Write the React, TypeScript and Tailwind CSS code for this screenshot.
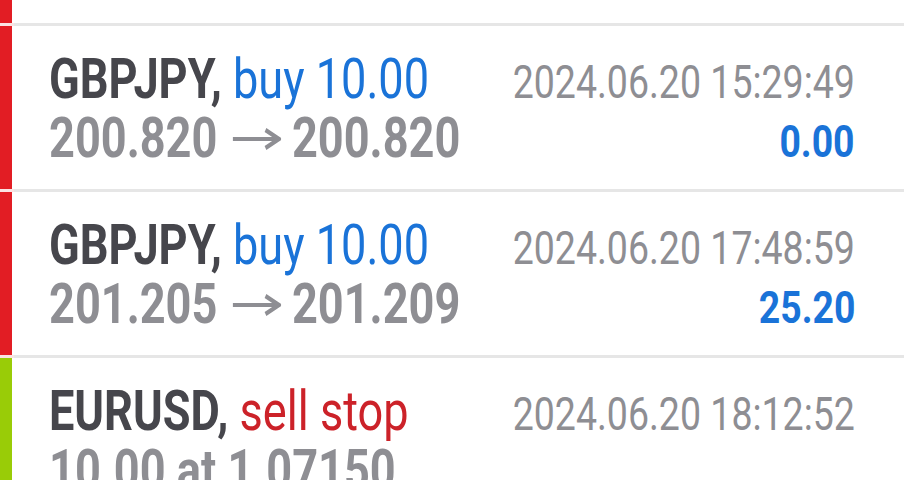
import React from "react";

type Deal = {
  symbol: string;
  action: string;
  side: "buy" | "sell";
  from?: string;
  to?: string;
  detail?: string;
  time: string;
  profit?: string;
  bar: string;
};

const deals: Deal[] = [
  {
    symbol: "GBPJPY",
    action: "buy 10.00",
    side: "buy",
    from: "200.820",
    to: "200.820",
    time: "2024.06.20 15:29:49",
    profit: "0.00",
    bar: "bg-[#e21d24]",
  },
  {
    symbol: "GBPJPY",
    action: "buy 10.00",
    side: "buy",
    from: "201.205",
    to: "201.209",
    time: "2024.06.20 17:48:59",
    profit: "25.20",
    bar: "bg-[#e21d24]",
  },
  {
    symbol: "EURUSD",
    action: "sell stop",
    side: "sell",
    detail: "10.00 at 1.07150",
    time: "2024.06.20 18:12:52",
    bar: "bg-[#99cc07]",
  },
];

function Arrow() {
  return (
    <svg
      width="59"
      height="22"
      viewBox="0 0 59 22"
      className="mb-[6px] ml-[19px] mr-[13px] inline-block"
      fill="none"
      stroke="#8e8e93"
      strokeWidth="4"
    >
      <path d="M0 11H56" />
      <path d="M40 2L56.5 11L40 20" strokeWidth="4.5" />
    </svg>
  );
}

function Row({ deal }: { deal: Deal }) {
  return (
    <div className="flex h-[166px] shrink-0">
      <div className="flex w-[14px] shrink-0 flex-col">
        <div className="h-[3px] bg-[#fbe3e3]" />
        <div className={`w-[12px] flex-1 ${deal.bar}`} />
      </div>
      <div className="flex-1 border-t-[3px] border-[#e6e6e6] pl-[35px] pr-[49px] pt-[24px]">
        <div className="flex items-baseline">
          <div className="w-0 whitespace-nowrap text-[55px] leading-[59px]">
            <span className="inline-block origin-left scale-x-[0.82] font-bold text-[#46464c]">
              {deal.symbol},{" "}
              <span
                className={
                  deal.side === "buy"
                    ? "font-normal text-[#1a73d8]"
                    : "font-normal text-[#cc2229]"
                }
              >
                {deal.action}
              </span>
            </span>
          </div>
          <span className="ml-auto inline-block origin-right scale-x-[0.815] whitespace-nowrap text-[46px] leading-none text-[#8e8e93]">
            {deal.time}
          </span>
        </div>
        <div className="flex items-baseline">
          <div className="w-0 whitespace-nowrap text-[55px] leading-[59px]">
            <span className="inline-block origin-left scale-x-[0.82] font-bold text-[#8e8e93]">
              {deal.detail ?? (
                <>
                  {deal.from}
                  <Arrow />
                  {deal.to}
                </>
              )}
            </span>
          </div>
          {deal.profit && (
            <span className="ml-auto inline-block origin-right scale-x-[0.83] whitespace-nowrap text-[45px] font-bold leading-none text-[#1a73d8]">
              {deal.profit}
            </span>
          )}
        </div>
      </div>
    </div>
  );
}

export default function App() {
  return (
    <div
      className="flex h-[480px] w-[904px] flex-col overflow-hidden bg-white"
      style={{ fontFamily: "Roboto, 'Liberation Sans', sans-serif" }}
    >
      <div className="flex h-[23px] shrink-0">
        <div className="w-[12px] bg-[#e21d24]" />
      </div>
      {deals.map((d, i) => (
        <Row key={i} deal={d} />
      ))}
    </div>
  );
}
